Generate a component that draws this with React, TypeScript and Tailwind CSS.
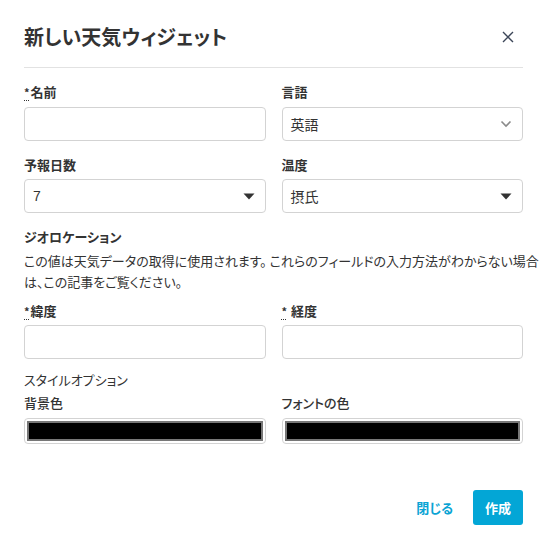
import React from "react";

const Req = () => (
  <abbr
    title="必須"
    className="mr-[1px] text-[11px] align-top underline decoration-dotted decoration-[1px] underline-offset-[3px]"
  >
    *
  </abbr>
);

const Label = ({ children, className = "" }: { children: React.ReactNode; className?: string }) => (
  <div className={"text-[13px] leading-[20px] font-bold text-[#333] " + className}>{children}</div>
);

const Box = ({ children, className = "" }: { children?: React.ReactNode; className?: string }) => (
  <div
    className={
      "h-[34px] rounded-[4px] border border-[#d3d3d3] bg-white flex items-center px-[8px] text-[14px] text-[#333] " +
      className
    }
  >
    {children}
  </div>
);

const Caret = () => (
  <svg width="12" height="7" viewBox="0 0 12 7" className="ml-auto mr-[2px]">
    <path d="M0.5 0.5 L11.5 0.5 L6 6.5 Z" fill="#333" />
  </svg>
);

const Chevron = () => (
  <svg width="12" height="8" viewBox="0 0 12 8" className="ml-auto mr-[2px]">
    <path d="M1.5 1.5 L6 6 L10.5 1.5" fill="none" stroke="#8a8a8a" strokeWidth="1.6" />
  </svg>
);

const ColorBox = () => (
  <div className="mt-[5px] h-[26px] rounded-[4px] border border-[#d3d3d3] bg-white p-[2px]">
    <div className="h-full w-full border-[2px] border-[#777] bg-black" />
  </div>
);

export default function App() {
  return (
    <div
      className="w-[543px] h-[549px] bg-white text-[#333] [font-feature-settings:'palt']"
      style={{ fontFamily: '"Noto Sans CJK JP", "Noto Sans", sans-serif' }}
    >
      <div className="pl-6 pr-5">
        <div className="pt-[23px] pb-4 flex items-center justify-between border-b border-[#e2e2e2]">
          <h1 className="text-[20px] leading-[28px] font-bold text-[#333]">新しい天気ウィジェット</h1>
          <svg width="12" height="12" viewBox="0 0 12 12" className="mr-[9px]">
            <path d="M1 1 L11 11 M11 1 L1 11" stroke="#3c4658" strokeWidth="1.4" />
          </svg>
        </div>

        <div className="pt-[14px] grid grid-cols-2 gap-x-4">
          <div>
            <Label>
              <Req />
              名前
            </Label>
            <Box className="mt-[5px]" />
          </div>
          <div>
            <Label>言語</Label>
            <Box className="mt-[5px]">
              <span>英語</span>
              <Chevron />
            </Box>
          </div>

          <div className="mt-[14px]">
            <Label>予報日数</Label>
            <Box className="mt-[4px]">
              <span style={{ fontFamily: '"Liberation Sans", sans-serif' }}>7</span>
              <Caret />
            </Box>
          </div>
          <div className="mt-[14px]">
            <Label>温度</Label>
            <Box className="mt-[4px]">
              <span>摂氏</span>
              <Caret />
            </Box>
          </div>
        </div>

        <div className="mt-[14px]">
          <Label>ジオロケーション</Label>
          <p className="mt-[3px] text-[13px] leading-[21px] text-[#333]">
            <span className="whitespace-nowrap">
              この値は天気データの取得に使用されます。 これらのフィールドの入力方法がわからない場合
            </span>
            <br />
            は、この記事をご覧ください。
          </p>
        </div>

        <div className="mt-[9px] grid grid-cols-2 gap-x-4">
          <div>
            <Label>
              <Req />
              緯度
            </Label>
            <Box className="mt-[4px]" />
          </div>
          <div>
            <Label>
              <Req /> 経度
            </Label>
            <Box className="mt-[4px]" />
          </div>
        </div>

        <div className="mt-[11px]">
          <div className="text-[13px] leading-[20px] text-[#333]">スタイルオプション</div>
          <div className="mt-[3px] grid grid-cols-2 gap-x-4">
            <div>
              <div className="text-[13px] leading-[20px] font-medium text-[#333]">背景色</div>
              <ColorBox />
            </div>
            <div>
              <div className="text-[13px] leading-[20px] font-medium text-[#333]">フォントの色</div>
              <ColorBox />
            </div>
          </div>
        </div>

        <div className="mt-[46px] flex items-center justify-end">
          <button className="mr-[20px] text-[13px] font-bold text-[#0aa3d4]">閉じる</button>
          <button className="w-[50px] h-[35px] rounded-[3px] bg-[#03a6d6] text-white text-[13px] font-bold">
            作成
          </button>
        </div>
      </div>
    </div>
  );
}
